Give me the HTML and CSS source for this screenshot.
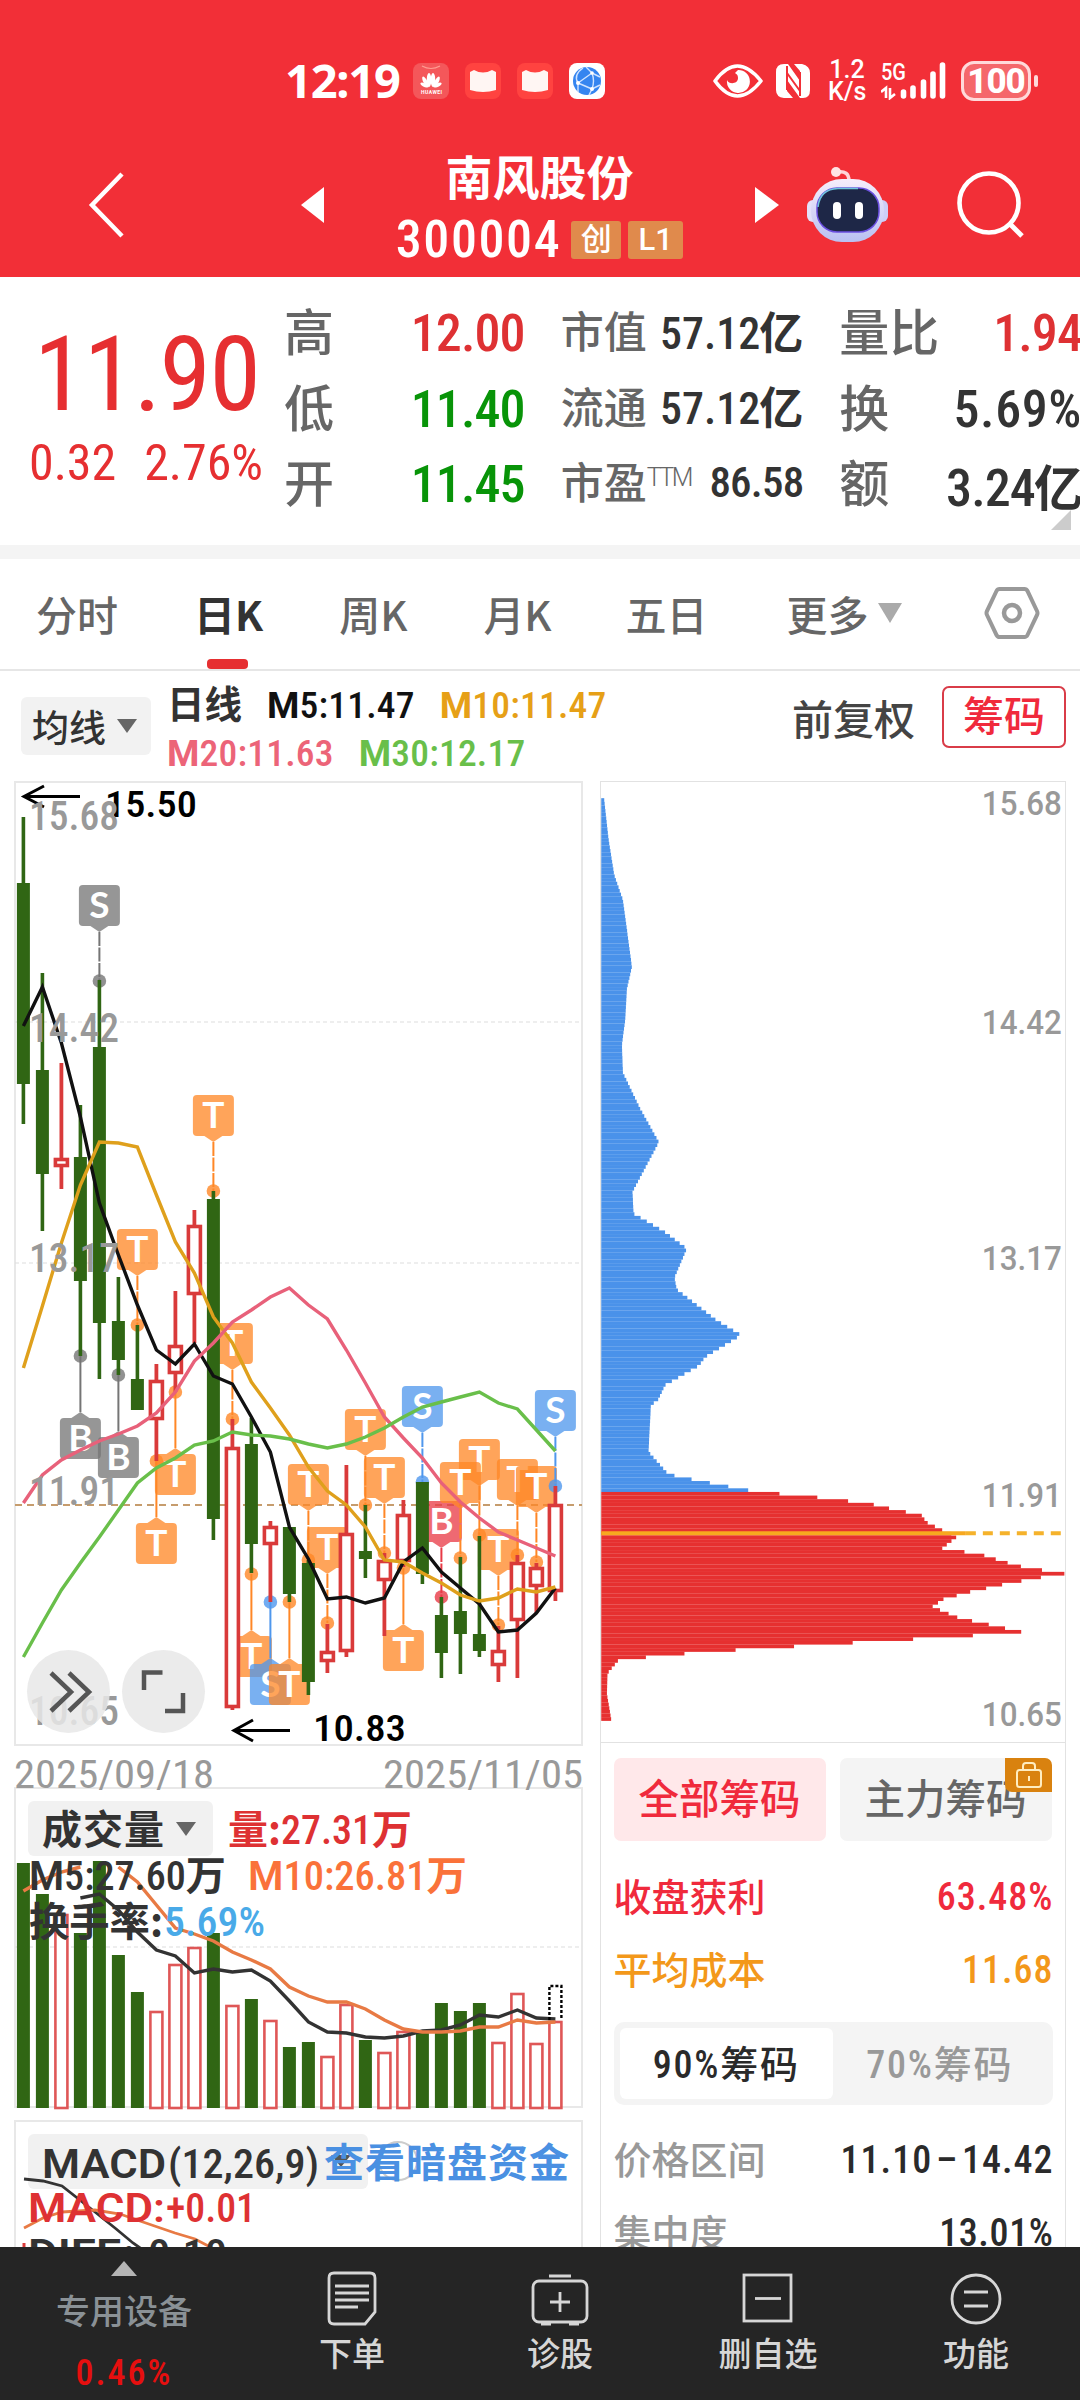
FILE: index.html
```html
<!DOCTYPE html>
<html lang="zh-CN">
<head>
    <meta charset="UTF-8">
    <meta name="viewport" content="width=device-width, initial-scale=1.0">
    <title>南风股份 300004</title>
    <link rel="stylesheet" href="styles.css">
</head>
<body>

    <header class="header">
        <div class="status">
            <div class="status-left">
                <span class="clock">12:19</span>
                <svg class="app app-hw" viewBox="0 0 36 36"><rect width="36" height="36" rx="8" fill="#f4575a"/><path d="M9 3q9 5 18 0" fill="none" stroke="#ff9c92" stroke-width="1.2"/><g fill="#fff"><ellipse cx="16" cy="17" rx="2.3" ry="7"/><ellipse cx="20" cy="17" rx="2.3" ry="7"/><ellipse cx="12.5" cy="19" rx="2" ry="6" transform="rotate(-28 12.5 19)"/><ellipse cx="23.5" cy="19" rx="2" ry="6" transform="rotate(28 23.5 19)"/><ellipse cx="11" cy="22" rx="1.7" ry="4" transform="rotate(-60 11 22)"/><ellipse cx="25" cy="22" rx="1.7" ry="4" transform="rotate(60 25 22)"/></g><text x="8" y="31" textLength="21" class="hw-text">HUAWEI</text></svg>
                <svg class="app" viewBox="0 0 36 36"><rect width="36" height="36" rx="8" fill="#ff4340"/><path d="M5 9l4-2q9 5 18 0l4 2v18q-13 4-26 0z" fill="#fff6f3"/></svg>
                <svg class="app" viewBox="0 0 36 36"><rect width="36" height="36" rx="8" fill="#ff4340"/><path d="M5 9l4-2q9 5 18 0l4 2v18q-13 4-26 0z" fill="#fff6f3"/></svg>
                <svg class="app" viewBox="0 0 36 36"><rect width="36" height="36" rx="8" fill="#fff"/><circle cx="18" cy="18" r="14" fill="#3585f0"/><path d="M9 20L23 10M9 20L23 26M23 10Q26 18 23 26M9 20Q4 12 14 5M23 10L17 4M23 10L31 14M23 26L20 32M23 26L31 22M9 20L9 29" fill="none" stroke="#cfe3ff" stroke-width="1.4"/><circle cx="9" cy="20" r="2" fill="#fff"/><circle cx="23" cy="10" r="1.8" fill="#fff"/><circle cx="23" cy="26" r="2" fill="#fff"/></svg>
            </div>
            <div class="status-right">
                <svg width="50" height="34" viewBox="0 0 50 34"><path d="M2 17Q24-13 48 17Q24 47 2 17z" fill="none" stroke="#fff" stroke-width="3.6" stroke-linejoin="round"/><path d="M25 6a11.5 11.5 0 1 1-11 10c2 5 11 4 11-2 0-4-2-4-3-5z" fill="#fff"/></svg>
                <svg class="nfc" width="34" height="34" viewBox="0 0 34 34"><path d="M8 0h4l12 17V7l-6-7h8q8 2 8 9v17q0 8-7 8h-3L11 16v11l6 7H8q-8-1-8-8V8q0-8 8-8z" fill="#fff"/><path d="M11 2v24M24 8v24M11 9l13 18" stroke="#f22f37" stroke-width="2" fill="none"/></svg>
                <div class="speed"><span>1.2</span><span>K/s</span></div>
                <div class="signal">
                    <svg width="66" height="38" viewBox="0 0 66 38"><text x="0" y="18" textLength="25" lengthAdjust="spacingAndGlyphs" class="net">5G</text><path d="M0 30l5-4v10M9 26v10l5-4" stroke="#fff" stroke-width="2.6" fill="none"/><path d="M22.500 30v4M32 26v8M42.500 20v14M52 12v22M61.500 3v31" stroke="#fff" stroke-width="5.600" stroke-linecap="round"/></svg>
                </div>
                <div class="battery"><span>100</span></div><i class="nub"></i>
            </div>
        </div>
        <div class="titlebar">
            <svg class="back" width="40" height="68" viewBox="0 0 40 68"><path d="M35 3L5 34L35 65" fill="none" stroke="#fff" stroke-width="4.500"/></svg>
            <i class="prev"></i>
            <div class="stock">
                <div class="stock-name">南风股份</div>
                <div class="stock-code"><span>300004</span><em>创</em><em>L1</em></div>
            </div>
            <i class="next"></i>
            <svg class="robot" width="82" height="76" viewBox="0 0 82 76">
                <defs><linearGradient id="shell" x1="0" y1="0" x2="0" y2="1"><stop offset="0" stop-color="#f6edfb"/><stop offset="1" stop-color="#b9c0f2"/></linearGradient></defs>
                <path d="M30 5q12-2 12 9" fill="none" stroke="#ffd5d8" stroke-width="3.500"/><circle cx="29" cy="5" r="5" fill="#ffe3e4"/>
                <rect x="0" y="33" width="14" height="22" rx="6" fill="#e3e0fa"/><rect x="67" y="33" width="14" height="22" rx="6" fill="#cdcdf6"/>
                <rect x="4" y="12" width="73" height="63" rx="31" fill="url(#shell)"/>
                <rect x="10" y="21" width="62" height="44" rx="20" fill="#1e2747" stroke="#6b4fe0" stroke-width="1.500"/>
                <path d="M11 40q2-18 20-18.500h20" fill="none" stroke="#6fc4dc" stroke-width="1.500"/>
                <rect x="26" y="35" width="8" height="17" rx="4" fill="#fff"/><rect x="48" y="35" width="8" height="17" rx="4" fill="#fff"/>
            </svg>
            <svg class="search" width="70" height="70" viewBox="0 0 70 70"><circle cx="33" cy="33" r="29.500" fill="none" stroke="#fff" stroke-width="4.600"/><path d="M54 54l12 12" stroke="#fff" stroke-width="5"/></svg>
        </div>
    </header>

    <section class="quote">
        <div class="price">
            <div class="now">11.90</div>
            <div class="change"><span>0.32</span><span>2.76%</span></div>
        </div>
        <div class="col">
            <div class="item"><label>高</label><b class="up">12.00</b></div>
            <div class="item"><label>低</label><b class="down">11.40</b></div>
            <div class="item"><label>开</label><b class="down">11.45</b></div>
        </div>
        <div class="col small">
            <div class="item"><label>市值</label><b>57.12<i>亿</i></b></div>
            <div class="item"><label>流通</label><b>57.12<i>亿</i></b></div>
            <div class="item"><label>市盈<sup>TTM</sup></label><b class="pe">86.58</b></div>
        </div>
        <div class="col">
            <div class="item"><label>量比</label><b class="up">1.94</b></div>
            <div class="item"><label>换</label><b class="loose">5.69%</b></div>
            <div class="item"><label>额</label><b>3.24<i>亿</i></b></div>
        </div>
        <svg class="corner" width="20" height="20"><path d="M20 0v20H0z" fill="#ccc"/></svg>
    </section>

    <nav class="tabs">
        <a>分时</a>
        <a class="active">日K</a>
        <a>周K</a>
        <a>月K</a>
        <a>五日</a>
        <a>更多<i class="tri"></i></a>
        <svg width="56" height="54" viewBox="0 0 56 54"><path d="M15.500 3h25q2 0 3 2L53 25q1 2 0 4L43.500 49q-1 2-3 2h-25q-2 0-3-2L3 29q-1-2 0-4L12.500 5q1-2 3-2z" fill="none" stroke="#999" stroke-width="4"/><circle cx="28" cy="27" r="8" fill="none" stroke="#999" stroke-width="4.500"/></svg>
    </nav>

    <section class="ma-bar">
        <div class="ma-select">均线<i class="tri"></i></div>
        <div class="ma-list">
            <div><strong>日线</strong><span class="m5"><u>M</u>5:11.47</span><span class="m10"><u>M</u>10:11.47</span></div>
            <div><span class="m20"><u>M</u>20:11.63</span><span class="m30"><u>M</u>30:12.17</span></div>
        </div>
        <div class="fq">前复权</div>
        <div class="chip-btn">筹码</div>
    </section>

    <main class="content">
        <svg class="chart" width="590" height="1470" viewBox="0 777 590 1470">
            <!-- frames and grid -->
            <g fill="none" stroke="#e8e8e8" stroke-width="2">
                <rect x="15" y="782" width="567" height="963"/>
                <rect x="15" y="1788" width="567" height="319"/>
                <path d="M15 2250V2121H582V2250"/>
            </g>
            <path d="M15 1022H582M15 1263H582M15 1947H582" stroke="#ddd" stroke-width="1.200" stroke-dasharray="4 3"/>
            <path d="M15 1505H582" stroke="#c69c6d" stroke-width="1.800" stroke-dasharray="7 5"/>

            <g id="flags"></g>
            <g id="candles"></g>
            <g id="maLines"></g>

            <g class="peak">
                <path d="M80 796.500H24M44 786L24 796.500L44 807M290 1730.500H234M253 1720L234 1730.500L253 1741"/>
                <text x="105" y="817" textLength="92" lengthAdjust="spacingAndGlyphs">15.50</text>
                <text x="313" y="1741" textLength="93" lengthAdjust="spacingAndGlyphs">10.83</text>
            </g>
            <g class="axis">
                <text x="29" y="830" textLength="90" lengthAdjust="spacingAndGlyphs">15.68</text>
                <text x="29" y="1042" textLength="90" lengthAdjust="spacingAndGlyphs">14.42</text>
                <text x="29" y="1272" textLength="90" lengthAdjust="spacingAndGlyphs">13.17</text>
                <text x="29" y="1505" textLength="90" lengthAdjust="spacingAndGlyphs">11.91</text>
                <text x="29" y="1725" textLength="90" lengthAdjust="spacingAndGlyphs">10.65</text>
            </g>

            <g class="round-btn">
                <circle cx="68.500" cy="1691.500" r="41.500"/>
                <path d="M51 1673l20 19-20 19M69 1673l20 19-20 19"/>
                <circle cx="163.500" cy="1691.500" r="41.500"/>
                <path d="M144 1690v-17.500h18.500M165 1711h18v-18"/>
            </g>

            <g class="date">
                <text x="14" y="1788" textLength="200" lengthAdjust="spacingAndGlyphs">2025/09/18</text>
                <text x="383" y="1788" textLength="200" lengthAdjust="spacingAndGlyphs">2025/11/05</text>
            </g>

            <!-- volume -->
            <rect class="pill" x="28" y="1801" width="185" height="55" rx="6"/>
            <g id="volumes"></g>
            <g class="legend">
                <text x="42" y="1844" textLength="122" class="cn">成交量</text>
                <path d="M176 1822h20l-10 14z" fill="#666"/>
                <text x="228" y="1844" textLength="184" lengthAdjust="spacingAndGlyphs" fill="#de3133"><tspan class="cn">量:</tspan>27.31<tspan class="cn">万</tspan></text>
                <text x="29" y="1890" textLength="197" lengthAdjust="spacingAndGlyphs"><tspan class="wide">M</tspan>5:27.60<tspan class="cn">万</tspan></text>
                <text x="248" y="1890" textLength="219" lengthAdjust="spacingAndGlyphs" fill="#fa723a"><tspan class="wide">M</tspan>10:26.81<tspan class="cn">万</tspan></text>
                <text x="29" y="1936" textLength="134" lengthAdjust="spacingAndGlyphs" class="cn">换手率:</text>
                <text x="164" y="1936" textLength="101" lengthAdjust="spacingAndGlyphs" fill="#49aae8">5.69%</text>
            </g>

            <!-- macd -->
            <rect class="pill" x="28" y="2134" width="340" height="55" rx="6"/>
            <path d="M331 2155h20l-10 12z" fill="#555"/>
            <circle cx="398" cy="2161" r="19" fill="none" stroke="#ccc" stroke-width="2"/>
            <path d="M24 2179L43 2181L62 2186L90 2208L115 2228L133 2243L146 2252" fill="none" stroke="#333" stroke-width="2.800"/>
            <path d="M24 2228L43 2218L62 2212L95 2210L120 2214L140 2221L175 2233L195 2239L214 2249" fill="none" stroke="#e87a44" stroke-width="2.800"/>
            <path d="M24 2243v10" stroke="#d93a3a" stroke-width="3"/>
            <g class="legend">
                <text x="42" y="2178" textLength="124" lengthAdjust="spacingAndGlyphs" class="wide">MACD</text>
                <text x="168" y="2178" textLength="151" lengthAdjust="spacingAndGlyphs">(12,26,9)</text>
                <text x="324" y="2177" textLength="245" fill="#4a90e2" class="cn">查看暗盘资金</text>
                <text x="28" y="2222" textLength="137" lengthAdjust="spacingAndGlyphs" fill="#de3133" class="wide">MACD:</text>
                <text x="166" y="2222" textLength="90" lengthAdjust="spacingAndGlyphs" fill="#de3133">+0.01</text>
                <text x="28" y="2268" textLength="93" lengthAdjust="spacingAndGlyphs" class="wide">DIFF</text>
                <text x="123" y="2268" textLength="104" lengthAdjust="spacingAndGlyphs">:-0.10</text>
            </g>
        </svg>

        <aside class="chips">
            <svg class="profile" width="466" height="962" viewBox="600 781 466 962">
                <g id="profile"></g>
                <path d="M601 1534H966" stroke="#f7a81f" stroke-width="4"/>
                <path d="M966 1534H1062" stroke="#f5b22b" stroke-width="4" stroke-dasharray="10 7"/>
                <g class="scale">
                    <text x="982" y="815" textLength="80" lengthAdjust="spacingAndGlyphs">15.68</text>
                    <text x="982" y="1034" textLength="80" lengthAdjust="spacingAndGlyphs">14.42</text>
                    <text x="982" y="1271" textLength="80" lengthAdjust="spacingAndGlyphs">13.17</text>
                    <text x="982" y="1508" textLength="80" lengthAdjust="spacingAndGlyphs">11.91</text>
                    <text x="982" y="1727" textLength="80" lengthAdjust="spacingAndGlyphs">10.65</text>
                </g>
            </svg>
            <div class="chip-info">
                <div class="chip-tabs">
                    <div class="on">全部筹码</div>
                    <div>主力筹码
                        <span class="lock"><svg width="28" height="28" viewBox="0 0 28 28"><rect x="2" y="9" width="24" height="17" rx="2.500" fill="none" stroke="#ffedc0" stroke-width="2"/><path d="M8 9V5q0-3 3-3h6q3 0 3 3v4M14 15v5" fill="none" stroke="#ffedc0" stroke-width="2"/></svg></span>
                    </div>
                </div>
                <div class="line red"><span>收盘获利</span><b>63.48%</b></div>
                <div class="line orange"><span>平均成本</span><b>11.68</b></div>
                <div class="segment"><div class="on">90%筹码</div><div>70%筹码</div></div>
                <div class="line"><span>价格区间</span><b>11.10 – 14.42</b></div>
                <div class="line"><span>集中度</span><b>13.01%</b></div>
            </div>
        </aside>
    </main>

    <footer class="footer">
        <div class="sector"><i></i><span>专用设备</span><b>0.46%</b></div>
        <div class="tool">
            <svg width="60" height="60" viewBox="0 0 60 60"><path d="M12 4h36q5 0 5 5v34L43 55H12q-5 0-5-5V9q0-5 5-5z"/><path d="M13 17h34M13 24h34M13 31h34M13 38h23"/></svg>
            <span>下单</span>
        </div>
        <div class="tool">
            <svg width="60" height="60" viewBox="0 0 60 60"><rect x="3" y="12" width="54" height="41" rx="6"/><path d="M19 7h22M30 23v20M20 33h20M11 55h10M39 55h10"/></svg>
            <span>诊股</span>
        </div>
        <div class="tool">
            <svg width="60" height="60" viewBox="0 0 60 60"><rect x="6" y="6" width="47" height="46"/><path d="M17 29.500h26"/></svg>
            <span>删自选</span>
        </div>
        <div class="tool">
            <svg width="60" height="60" viewBox="0 0 60 60"><circle cx="30" cy="30" r="24"/><path d="M18 23h24M18 37h24"/></svg>
            <span>功能</span>
        </div>
    </footer>

    <script src="chart.js"></script>
</body>
</html>
```
FILE: styles.css
```css
* {
    box-sizing: border-box;
}
body {
    margin: 0;
    width: 1080px;
    height: 2400px;
    overflow: hidden;
    display: flex;
    flex-direction: column;
    background-color: #fff;
    color: #333;
    font-family: "Roboto Condensed", "Noto Sans CJK SC", sans-serif;
    font-weight: 500;
}
i, em {
    font-style: normal;
}
svg {
    display: block;
    flex: none;
}

/* header */
.header {
    height: 277px;
    flex: none;
    background-color: #f22f37;
    color: #fff;
}
.status {
    height: 142px;
    padding: 20px 42px 0 285px;
    display: flex;
    justify-content: space-between;
    align-items: center;
}
.status-left, .status-right {
    display: flex;
    align-items: center;
}
.clock {
    width: 128px;
    font-family: "Noto Sans", sans-serif;
    font-weight: 700;
    font-size: 47px;
    line-height: 46px;
    letter-spacing: -1.2px;
    padding-bottom: 2px;
}
.app {
    width: 36px;
    height: 36px;
    margin-right: 16px;
}
.hw-text {
    font: 700 5px Roboto, sans-serif;
    fill: #fff;
}
.nfc {
    margin-left: 13px;
}
.speed {
    width: 38px;
    margin-left: 18px;
    display: flex;
    flex-direction: column;
    font-family: Roboto, sans-serif;
    font-size: 25px;
    line-height: 22px;
    text-align: center;
}
.signal {
    margin-left: 15px;
}
.net {
    font: 500 23px Roboto, sans-serif;
    fill: #fff;
}
.battery {
    width: 70px;
    height: 40px;
    margin-left: 14px;
    border: 3px solid #ffd9da;
    border-radius: 13px;
    background-color: #f5676b;
    font-family: Roboto, sans-serif;
    font-weight: 800;
    font-size: 35px;
    line-height: 35px;
    letter-spacing: -1px;
    text-align: center;
}
.nub {
    width: 4px;
    height: 12px;
    margin-left: 3px;
    border-radius: 2px;
    background-color: #ffd9da;
}
.titlebar {
    height: 135px;
    display: flex;
    align-items: center;
    padding: 0 52px 10px 87px;
}
.prev, .next {
    width: 0;
    height: 0;
    border: 18px solid transparent;
}
.prev {
    margin-left: 174px;
    border-left: none;
    border-right: 23px solid #fff;
}
.next {
    border-right: none;
    border-left: 24px solid #fff;
}
.stock {
    width: 431px;
    padding-top: 12px;
    display: flex;
    flex-direction: column;
    align-items: center;
}
.stock-name {
    font-size: 47px;
    line-height: 58px;
    font-weight: 700;
}
.stock-code {
    display: flex;
    align-items: center;
    height: 64px;
    gap: 7px;
    font-size: 52px;
    letter-spacing: 1.6px;
}
.stock-code span {
    margin-right: 3px;
}
.stock-code em {
    width: 50px;
    height: 38px;
    border-radius: 3px;
    background-color: #e08a4c;
    font-size: 31px;
    line-height: 37px;
    letter-spacing: 0;
    text-align: center;
}
.stock-code em:last-child {
    width: 55px;
    font-family: Roboto, sans-serif;
}
.robot {
    margin-left: 28px;
}
.search {
    margin-left: 67px;
}

/* quote */
.quote {
    position: relative;
    height: 282px;
    flex: none;
    display: flex;
    gap: 40px;
    padding-top: 18px;
    border-bottom: 14px solid #f4f4f4;
}
.price {
    width: 246px;
    color: #e62f31;
    white-space: nowrap;
}
.now {
    margin: 28px 0 0 34px;
    font-size: 104px;
    line-height: 104px;
    letter-spacing: -1.5px;
    font-weight: 450;
}
.change {
    display: flex;
    justify-content: space-between;
    margin: 10px -17px 0 29px;
    font-size: 50px;
    line-height: 52px;
    font-weight: 450;
}
.col {
    width: 237px;
    font-size: 52px;
}
.col.small {
    width: 239px;
    font-size: 44px;
}
.col:nth-child(4) {
    width: 239px;
}
.item {
    height: 75.5px;
    display: flex;
    align-items: center;
    justify-content: space-between;
    white-space: nowrap;
}
.item label {
    color: #666;
    font-size: 50px;
    padding-bottom: 7px;
    margin-left: -2px;
}
.item b {
    font-weight: 500;
    letter-spacing: -0.9px;
    margin-right: -2px;
    padding-top: 2px;
}
.small .item b {
    padding-top: 0;
    padding-bottom: 6px;
    letter-spacing: 0;
}
.small label {
    font-size: 43px;
}
.item sup {
    font-size: 25px;
    line-height: 0;
    font-weight: 300;
    font-family: Roboto, sans-serif;
    letter-spacing: -2.5px;
    vertical-align: 13px;
}
.small .item .pe {
    font-size: 43px;
    letter-spacing: -0.8px;
    padding-bottom: 3px;
}
.item .loose {
    letter-spacing: 0.6px;
}
.item b i {
    font-weight: 700;
    font-size: 49px;
    margin-left: -1px;
}
.small .item b i {
    font-size: 44px;
}
.up {
    color: #de3133;
}
.down {
    color: #089408;
}
.corner {
    position: absolute;
    right: 9px;
    bottom: 15px;
}

/* tabs */
.tabs {
    position: relative;
    height: 112px;
    flex: none;
    display: flex;
    align-items: center;
    padding: 0 40px 2px 36px;
    border-bottom: 2px solid #e6e6e6;
    font-family: "Noto Sans CJK SC", sans-serif;
    font-size: 41px;
    color: #666;
}
.tabs a {
    position: relative;
    margin-right: 76px;
    white-space: nowrap;
    line-height: 60px;
}
.tabs a:nth-child(4) {
    margin-right: 74px;
}
.tabs a:nth-child(6) {
    margin: 0 auto 0 3px;
    display: flex;
    align-items: center;
}
.tabs .active {
    color: #333;
    font-weight: 700;
}
.tabs .active::after {
    content: "";
    position: absolute;
    left: 13px;
    bottom: -26px;
    width: 41px;
    height: 10px;
    border-radius: 4px;
    background-color: #e62f31;
}
.tri {
    display: inline-block;
    border: 12px solid transparent;
    border-bottom: none;
    border-top: 20px solid #aaa;
    margin-left: 9px;
}

/* moving averages */
.ma-bar {
    height: 106px;
    flex: none;
    display: flex;
    align-items: center;
    padding: 0 14px 0 21px;
}
.ma-select {
    width: 130px;
    height: 58px;
    margin-top: 4px;
    display: flex;
    align-items: center;
    padding-left: 11px;
    border-radius: 6px;
    background-color: #f2f2f2;
    font-size: 37px;
}
.ma-select .tri {
    border-width: 14px 10.5px 0;
    border-top-color: #666;
    margin-left: 11px;
}
.ma-list {
    margin: 9px 0 0 16px;
    font-size: 37.5px;
    line-height: 48px;
}
.ma-list div {
    display: flex;
    height: 48px;
}
.ma-list strong {
    font-weight: 700;
    margin-right: 25px;
}
.ma-list u {
    font-family: Roboto, sans-serif;
    font-weight: 700;
    font-size: 37px;
    text-decoration: none;
}
.ma-list span {
    margin-right: 25px;
    letter-spacing: 0.2px;
}
.m5 { color: #111; }
.m10 { color: #e6a017; }
.m20 { color: #ec6478; }
.m30 { color: #69bf4a; }
.fq {
    margin-left: auto;
    margin-bottom: 14px;
    font-size: 41px;
    color: #444;
}
.chip-btn {
    width: 124px;
    height: 62px;
    margin-left: 27px;
    margin-bottom: 15px;
    border: 2px solid #d93c48;
    border-radius: 7px;
    color: #f02a3c;
    font-size: 41px;
    line-height: 58px;
    text-align: center;
}

/* charts */
.content {
    height: 1470px;
    flex: none;
    display: flex;
    gap: 10px;
    overflow: hidden;
}
.chart text {
    font-weight: 500;
}
.axis text {
    font-size: 40px;
    fill: #999;
}
.peak text {
    font-size: 37px;
    fill: #000;
}
.peak path {
    fill: none;
    stroke: #000;
    stroke-width: 3;
}
.chart .flag text {
    font-family: Lato, sans-serif;
    font-weight: 700;
    font-size: 37px;
    fill: #fff;
    text-anchor: middle;
}
.round-btn circle {
    fill: #e8e8e8;
    fill-opacity: 0.85;
}
.round-btn path {
    fill: none;
    stroke: #555;
    stroke-width: 4.5;
}
.chart .date text {
    font-size: 39px;
    font-weight: 450;
    fill: #999;
}
.pill {
    fill: #f1f1f1;
}
.legend {
    font-size: 40px;
    fill: #333;
}
.chart .wide {
    font-family: Roboto, sans-serif;
    font-weight: 600;
}
.chart .cn {
    font-family: "Noto Sans CJK SC", sans-serif;
    font-weight: 700;
}

/* chip distribution */
.chips {
    width: 466px;
    margin-top: 4px;
    border: 1.5px solid #e2e2e2;
    border-bottom: none;
}
.profile {
    border-bottom: 1.5px solid #e2e2e2;
    margin: -1px 0 0 -1px;
}
.scale text {
    font-family: Roboto, sans-serif;
    font-size: 33px;
    fill: #999;
}
.chip-info {
    padding: 15px 12.5px 0;
    font-size: 38px;
    white-space: nowrap;
}
.chip-tabs {
    display: flex;
    gap: 14px;
    margin-bottom: 19px;
}
.chip-tabs > div {
    position: relative;
    width: 212px;
    height: 83px;
    border-radius: 7px;
    background-color: #f4f4f4;
    color: #666;
    font-size: 40.5px;
    line-height: 84px;
    text-align: center;
}
.chip-tabs .on {
    background-color: #ffe8ea;
    color: #f02a3c;
}
.lock {
    position: absolute;
    top: 0;
    right: 0;
    width: 47px;
    height: 34px;
    padding: 3px 10px;
    border-radius: 0 7px 0 7px;
    background-color: #d9820f;
}
.line {
    display: flex;
    justify-content: space-between;
    align-items: center;
    height: 73px;
    color: #999;
}
.line span {
    padding-bottom: 5px;
}
.line b {
    font-weight: 500;
    color: #2a2a2a;
    letter-spacing: 1px;
    word-spacing: -6px;
    margin-right: -1px;
}
.line:last-child b {
    letter-spacing: 0.6px;
}
.line.red, .line.red b {
    color: #f02a3c;
}
.line.orange, .line.orange b {
    color: #f3981a;
}
.segment {
    height: 83px;
    margin: 16px 0 18px;
    padding: 6px;
    display: flex;
    border-radius: 10px;
    background-color: #f4f4f4;
    color: #999;
    line-height: 74px;
    letter-spacing: 1.8px;
    text-align: center;
}
.segment div {
    flex: 1;
    border-radius: 6px;
}
.segment .on {
    background-color: #fff;
    color: #2a2a2a;
}

/* bottom bar */
.footer {
    flex: 1;
    display: flex;
    background-color: #252525;
    color: #d6d6d6;
    font-size: 33px;
}
.sector {
    width: 248px;
    display: flex;
    flex-direction: column;
    align-items: center;
    padding-top: 14px;
}
.sector i {
    border: 13px solid transparent;
    border-top: none;
    border-bottom: 15px solid #b5b5b5;
}
.sector span {
    margin-top: 12px;
    line-height: 48px;
    font-size: 34px;
    color: #8a9196;
}
.sector b {
    margin-top: 12px;
    line-height: 50px;
    font-size: 36px;
    font-weight: 500;
    letter-spacing: 2px;
    color: #e60f0f;
}
.tool {
    width: 208px;
    display: flex;
    flex-direction: column;
    align-items: center;
    padding-top: 22px;
}
.tool svg {
    fill: none;
    stroke: #d6d6d6;
    stroke-width: 2.8;
}
.tool span {
    line-height: 51px;
}
```
FILE: chart.js
```javascript
const STEP = 19;
const X0 = 23.4;
const GREEN = '#306614';
const RED = '#d93a3a';
const x = i => X0 + STEP * i;

// [rise, high, bodyTop, bodyBottom, low, volumeTop]
const days = [
    [0, 817, 883, 1084, 1124, 1863],
    [0, 973, 1070, 1174, 1231, 1894],
    [1, 1063, 1158, 1167, 1189, 1914],
    [0, 1105, 1157, 1281, 1356, 1933],
    [0, 980, 1047, 1323, 1379, 1861],
    [0, 1277, 1321, 1360, 1375, 1955],
    [0, 1325, 1379, 1410, 1410, 1992],
    [1, 1364, 1380, 1420, 1461, 2011],
    [1, 1291, 1345, 1374, 1392, 1964],
    [1, 1210, 1225, 1295, 1343, 1947],
    [0, 1191, 1199, 1519, 1540, 1933],
    [1, 1419, 1447, 1708, 1710, 2005],
    [0, 1418, 1444, 1544, 1573, 1999],
    [1, 1521, 1526, 1545, 1602, 2020],
    [0, 1527, 1527, 1594, 1602, 2047],
    [0, 1560, 1563, 1682, 1695, 2042],
    [1, 1624, 1651, 1662, 1673, 2056],
    [1, 1465, 1533, 1652, 1657, 2004],
    [0, 1505, 1551, 1559, 1578, 2040],
    [1, 1553, 1560, 1581, 1636, 2052],
    [1, 1500, 1514, 1562, 1567, 2031],
    [0, 1482, 1482, 1574, 1584, 2031],
    [0, 1597, 1615, 1653, 1678, 2003],
    [0, 1557, 1611, 1634, 1674, 2011],
    [0, 1536, 1634, 1651, 1657, 2003],
    [1, 1626, 1650, 1666, 1682, 2042],
    [1, 1555, 1562, 1621, 1678, 1993],
    [1, 1563, 1567, 1587, 1613, 2043],
    [1, 1486, 1504, 1592, 1601, 2021]
];

const ma = {
    '#111': [1026, 987, 1043, 1117, 1203, 1255, 1305, 1350, 1364, 1344, 1376, 1384, 1417, 1452, 1527, 1559, 1599, 1597, 1603, 1598, 1562, 1548, 1572, 1588, 1604, 1632, 1630, 1613, 1588],
    '#dfa01c': [1368, 1306, 1243, 1185, 1142, 1143, 1147, 1195, 1242, 1273, 1317, 1343, 1382, 1408, 1435, 1467, 1491, 1505, 1527, 1560, 1562, 1573, 1583, 1595, 1601, 1598, 1589, 1592, 1587],
    '#e8617a': [1503, 1475, 1460, 1450, 1441, 1434, 1426, 1413, 1392, 1361, 1343, 1322, 1310, 1297, 1288, 1305, 1319, 1350, 1383, 1417, 1438, 1458, 1483, 1502, 1518, 1532, 1540, 1548, 1556],
    '#69bf4a': [1657, 1623, 1590, 1563, 1537, 1510, 1483, 1468, 1458, 1445, 1441, 1432, 1435, 1436, 1439, 1444, 1448, 1444, 1437, 1428, 1417, 1407, 1402, 1397, 1392, 1403, 1409, 1430, 1451]
};

// [day, letter, colour, dot y, below]
const ORANGE = '#ff8726', GRAY = '#757575', BLUE = '#4f97ed', PINK = '#e83a46';
const flags = [
    [4, 'S', GRAY, 981, 0], [10, 'T', ORANGE, 1191, 0], [6, 'T', ORANGE, 1325, 0],
    [11, 'T', ORANGE, 1419, 0], [3, 'B', GRAY, 1356, 1], [5, 'B', GRAY, 1375, 1],
    [7, 'T', ORANGE, 1461, 1], [8, 'T', ORANGE, 1392, 1], [12, 'T', ORANGE, 1574, 1],
    [13, 'S', BLUE, 1602, 1], [14, 'T', ORANGE, 1602, 1], [15, 'T', ORANGE, 1560, 0],
    [16, 'T', ORANGE, 1623, 0], [18, 'T', ORANGE, 1505, 0], [19, 'T', ORANGE, 1553, 0],
    [20, 'T', ORANGE, 1568, 1], [21, 'S', BLUE, 1482, 0], [22, 'B', PINK, 1597, 0],
    [24, 'T', ORANGE, 1535, 0], [23, 'T', ORANGE, 1558, 0], [25, 'T', ORANGE, 1625, 0],
    [26, 'T', ORANGE, 1555, 0], [27, 'T', ORANGE, 1562, 0], [28, 'S', BLUE, 1486, 0]
];

const volMa5 = [1898, 1894, 1910, 1932, 1950, 1956, 1973, 1969, 1972, 1970, 1981, 2001, 2022, 2032, 2033, 2037, 2038, 2036, 2031, 2030, 2025, 2015, 2017, 2010, 2018, 2019];
const volMa10 = [1867, 1882, 1905, 1928, 1934, 1941, 1952, 1960, 1969, 1987, 1996, 2002, 2002, 2009, 2020, 2029, 2032, 2032, 2031, 2027, 2027, 2020, 2023, 2022];

function line(values, color, start) {
    const pts = values.map((v, i) => x(i + start) + ',' + v).join(' ');
    return `<polyline points="${pts}" fill="none" stroke="${color}" stroke-width="3.4"/>`;
}

document.getElementById('candles').innerHTML = days.map(([up, hi, top, bottom, low], i) => {
    if (up) {
        return `<path d="M${x(i)} ${hi}V${top}M${x(i)} ${bottom}V${low}" stroke="${RED}" stroke-width="3.8"/>
            <rect x="${x(i) - 6}" y="${top + 1.5}" width="12" height="${bottom - top - 3}" fill="#fff" stroke="${RED}" stroke-width="3.6"/>`;
    }
    return `<path d="M${x(i)} ${hi}V${low}" stroke="${GREEN}" stroke-width="3.6"/>
        <rect x="${x(i) - 6.5}" y="${top}" width="13" height="${bottom - top}" fill="${GREEN}"/>`;
}).join('');

document.getElementById('maLines').innerHTML = Object.keys(ma).map(c => line(ma[c], c, 0)).join('');

document.getElementById('flags').innerHTML = flags.map(([i, letter, color, y, below]) => {
    const top = below ? y + 62 : y - 96;
    const cx = x(i);
    const tail = below ? `M${cx - 9} ${top}l9 -6l9 6z` : `M${cx - 9} ${top + 41}l9 6l9 -6z`;
    const stem = below ? `M${cx} ${y}V${top - 6}` : `M${cx} ${top + 47}V${y}`;
    return `<g class="flag">
        <path d="${stem}" stroke="${color}" stroke-width="2" stroke-dasharray="${below ? 'none' : '14 1.5'}"/>
        <circle cx="${cx}" cy="${y}" r="6.8" fill="${color}" fill-opacity=".8"/>
        <g fill="${color}" fill-opacity=".76"><rect x="${cx - 20.5}" y="${top}" width="41" height="41" rx="4"/><path d="${tail}"/></g>
        <text x="${cx}" y="${top + 33}">${letter}</text>
    </g>`;
}).join('');

document.getElementById('volumes').innerHTML = days.map(([up, , , , , top], i) => {
    if (up) {
        return `<rect x="${x(i) - 6}" y="${top + 1}" width="12" height="${2107 - top}" fill="#fff" stroke="${RED}" stroke-opacity=".85" stroke-width="2.6"/>`;
    }
    return `<rect x="${x(i) - 6.5}" y="${top}" width="13" height="${2108 - top}" fill="${GREEN}"/>`;
}).join('') +
    line(volMa5, '#333', 3) +
    line([1891, 1880, 1872, 1867], '#e87a44', 0) +
    line(volMa10, '#e87a44', 5) +
    `<path d="M${x(28) - 6} 2020V1986H${x(28) + 6}V2020" fill="none" stroke="#000" stroke-width="2.4" stroke-dasharray="3 2"/>`;

// chip profile: [y, right edge]
const blue = [[800, 604], [839, 608.3], [875, 614], [900, 622.7], [967, 631.7], [989, 626.7], [1020, 625], [1045, 621.7], [1073, 622.7], [1109, 640], [1142.5, 658.7], [1192, 632.3], [1214, 633.3], [1232, 664], [1249, 686.7], [1278, 674.3], [1290, 676.7], [1321, 716.7], [1335.6, 741], [1357.5, 705], [1366, 699], [1385.6, 665], [1400, 658], [1406, 650.7], [1452.5, 648.3], [1475, 668.3], [1479, 686.7], [1482.5, 704.3], [1486, 722], [1490.5, 745.3]];
const red = [[1494, 774], [1497, 808], [1500.6, 838], [1504, 868], [1512, 901.7], [1515, 921], [1523, 926.7], [1530.6, 941.7], [1537, 957.7], [1549, 942.3], [1552, 960.7], [1555.6, 982.3], [1562.5, 1004], [1567, 1020], [1570.6, 1040.7], [1574.4, 1065], [1578, 1041.7], [1585, 1004], [1593, 968.7], [1600, 943.3], [1607.5, 932.3], [1618, 957], [1622, 973.3], [1625.6, 990], [1633, 1023], [1637, 962], [1640.6, 901.7], [1644, 845.3], [1647.5, 789], [1651, 732.7], [1655, 676.7], [1659, 636.7], [1661, 618.3], [1674, 607.3], [1695, 606.7], [1722, 611.3]];

function edge(points, y) {
    for (let i = 1; i < points.length; i++) {
        if (y <= points[i][0]) {
            const [y1, a] = points[i - 1], [y2, b] = points[i];
            return a + (b - a) * (y - y1) / (y2 - y1);
        }
    }
    return points[points.length - 1][1];
}

let bars = '';
const all = blue.concat(red);
for (let k = 0; k < 254; k++) {
    const y = 800 + k * 3.636;
    if (y > 1723) break;
    const color = y < 1492.5 ? '#4a92ea' : '#e63030';
    bars += `<rect x="601" y="${(y - 1.8).toFixed(2)}" width="${(edge(all, y) - 601).toFixed(1)}" height="3.75" fill="${color}"/>`;
}
document.getElementById('profile').innerHTML = bars;
```
